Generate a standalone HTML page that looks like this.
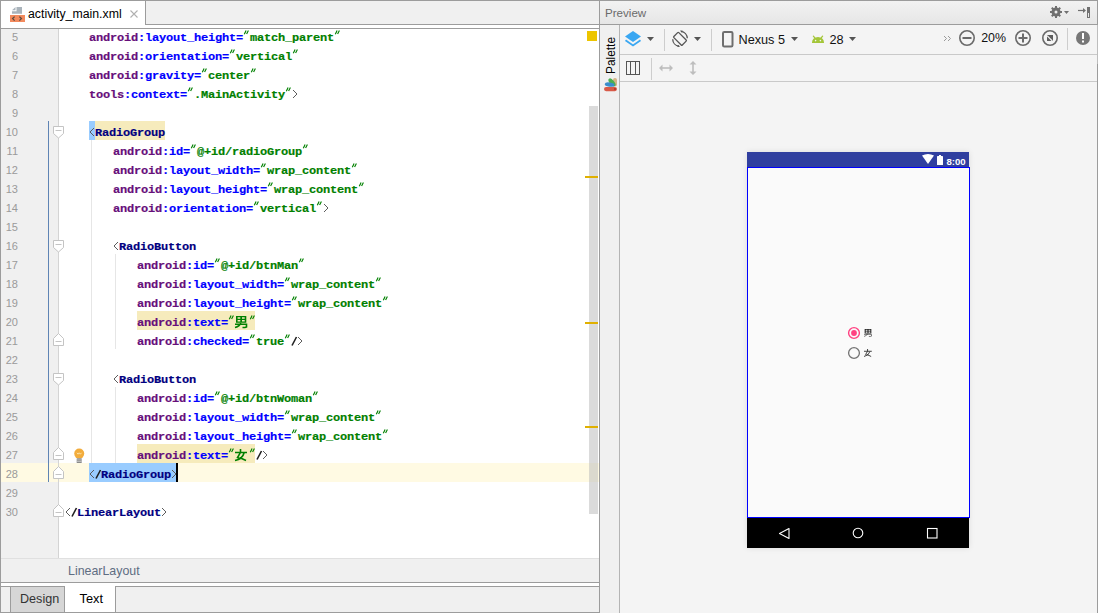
<!DOCTYPE html>
<html><head><meta charset="utf-8">
<style>
*{margin:0;padding:0;box-sizing:border-box}
html,body{width:1098px;height:613px;overflow:hidden;background:#f0f0f0;font-family:"Liberation Sans",sans-serif}
.a{position:absolute}
.ln{position:absolute;left:0;width:17px;text-align:right;font:11px "Liberation Sans",sans-serif;color:#9a9a9a;height:19px;line-height:19px;padding-top:2px}
.l{position:absolute;white-space:pre;font:bold 12px "Liberation Mono",monospace;letter-spacing:-0.2px;height:19px;line-height:19px;padding-top:2.5px;transform:scaleY(0.95);transform-origin:0 14.5px;-webkit-text-stroke:0.2px currentColor}
.p{color:#660e7a}
.b{color:#0000ff}
.g{color:#008000}
.t{color:#000080}
.k{color:#444;font-weight:normal;letter-spacing:-1.2px}
.cj{display:inline-block;width:14px;height:12px;vertical-align:-1px}
.sp{display:inline-block;width:6px;height:1px}
.sq{display:inline-block;width:7px;height:1px}
svg{position:absolute;overflow:visible}
</style></head><body>
<!-- outer borders -->
<div class="a" style="left:0;top:0;width:1098px;height:1px;background:#9c9c9c"></div>
<div class="a" style="left:0;top:0;width:1px;height:613px;background:#9c9c9c"></div>
<div class="a" style="left:1097px;top:0;width:1px;height:613px;background:#9c9c9c"></div>
<div class="a" style="left:599px;top:0;width:1px;height:613px;background:#9c9c9c"></div>

<!-- LEFT: tab strip -->
<div class="a" style="left:1px;top:1px;width:598px;height:27px;background:#fff"></div>
<div class="a" style="left:145px;top:1px;width:454px;height:24px;background:#f0f0f0;border-left:1px solid #9c9c9c;border-bottom:1px solid #9c9c9c"></div>
<div class="a" style="left:1px;top:28px;width:598px;height:1px;background:#9c9c9c"></div>
<!-- xml file icon -->
<svg style="left:10px;top:6px" width="16" height="16" viewBox="0 0 16 16">
  <path d="M2 4.3 L5.5 1 L5.5 4.3 Z" fill="#a9b3bb"/>
  <path d="M6.5 1 H12 V7.8 H2 V5.3 H6.5 Z" fill="#a9b3bb"/>
  <rect x="0" y="9" width="15" height="7" fill="#f28a5d"/>
  <path d="M4.6 10.6 L2.6 12.6 L4.6 14.6 M9.4 10.6 L11.4 12.6 L9.4 14.6" stroke="#5a4a40" stroke-width="1.3" fill="none"/>
</svg>
<div class="a" style="left:28px;top:7.59px;font-size:12.3px;color:#000;line-height:1">activity_main.xml</div>
<svg style="left:130px;top:10px" width="8" height="8" viewBox="0 0 8 8"><path d="M0.5 0.5 L7.5 7.5 M7.5 0.5 L0.5 7.5" stroke="#b0b0b0" stroke-width="1.1"/></svg>

<!-- editor -->
<div id="code" class="a" style="left:1px;top:29px;width:598px;height:529px;background:#fff;overflow:hidden">
  <div class="a" style="left:0;top:0;width:57px;height:529px;background:#f0f0f0"></div>
  <!-- current line row 28 -->
  <div class="a" style="left:0;top:434px;width:598px;height:19px;background:#fffae3"></div>
  <div class="a" style="left:57px;top:0;width:1px;height:529px;background:#d4d4d4"></div>
  <!-- change marker -->
  <div class="a" style="left:47px;top:92px;width:1px;height:361px;background:#5f84b4"></div>
  <!-- highlights -->
  <div class="a" style="left:88px;top:92px;width:6px;height:19px;background:#99ccff"></div>
  <div class="a" style="left:94px;top:92px;width:70px;height:19px;background:#f6ebbc"></div>
  <div class="a" style="left:136px;top:282px;width:118px;height:19px;background:#f6ebbc"></div>
  <div class="a" style="left:136px;top:415px;width:118px;height:19px;background:#f6ebbc"></div>
  <div class="a" style="left:88px;top:434px;width:87px;height:19px;background:#99ccff"></div>
  <div class="a" style="left:175px;top:434px;width:2px;height:19px;background:#000"></div>
  <!-- indent guides -->
  <div class="a" style="left:90px;top:111px;width:1px;height:323px;background:#e6e6e6"></div>
  <div class="a" style="left:114px;top:225px;width:1px;height:95px;background:#e6e6e6"></div>
  <div class="a" style="left:114px;top:358px;width:1px;height:76px;background:#e6e6e6"></div>
<div class="ln" style="top:-3px">5</div>
<div class="ln" style="top:16px">6</div>
<div class="ln" style="top:35px">7</div>
<div class="ln" style="top:54px">8</div>
<div class="ln" style="top:73px">9</div>
<div class="ln" style="top:92px">10</div>
<div class="ln" style="top:111px">11</div>
<div class="ln" style="top:130px">12</div>
<div class="ln" style="top:149px">13</div>
<div class="ln" style="top:168px">14</div>
<div class="ln" style="top:187px">15</div>
<div class="ln" style="top:206px">16</div>
<div class="ln" style="top:225px">17</div>
<div class="ln" style="top:244px">18</div>
<div class="ln" style="top:263px">19</div>
<div class="ln" style="top:282px">20</div>
<div class="ln" style="top:301px">21</div>
<div class="ln" style="top:320px">22</div>
<div class="ln" style="top:339px">23</div>
<div class="ln" style="top:358px">24</div>
<div class="ln" style="top:377px">25</div>
<div class="ln" style="top:396px">26</div>
<div class="ln" style="top:415px">27</div>
<div class="ln" style="top:434px">28</div>
<div class="ln" style="top:453px">29</div>
<div class="ln" style="top:472px">30</div>
<div class="l" style="top:-3px;left:88px"><span class="p">android</span><span class="b">:layout_height=</span><span class="sq"></span><span class="g">match_parent</span><span class="sq"></span></div>
<div class="l" style="top:16px;left:88px"><span class="p">android</span><span class="b">:orientation=</span><span class="sq"></span><span class="g">vertical</span><span class="sq"></span></div>
<div class="l" style="top:35px;left:88px"><span class="p">android</span><span class="b">:gravity=</span><span class="sq"></span><span class="g">center</span><span class="sq"></span></div>
<div class="l" style="top:54px;left:88px"><span class="p">tools</span><span class="b">:context=</span><span class="sq"></span><span class="g">.MainActivity</span><span class="sq"></span><span class="sp"></span></div>
<div class="l" style="top:92px;left:88px"><span class="sp"></span><span class="t">RadioGroup</span></div>
<div class="l" style="top:111px;left:112px"><span class="p">android</span><span class="b">:id=</span><span class="sq"></span><span class="g">@+id/radioGroup</span><span class="sq"></span></div>
<div class="l" style="top:130px;left:112px"><span class="p">android</span><span class="b">:layout_width=</span><span class="sq"></span><span class="g">wrap_content</span><span class="sq"></span></div>
<div class="l" style="top:149px;left:112px"><span class="p">android</span><span class="b">:layout_height=</span><span class="sq"></span><span class="g">wrap_content</span><span class="sq"></span></div>
<div class="l" style="top:168px;left:112px"><span class="p">android</span><span class="b">:orientation=</span><span class="sq"></span><span class="g">vertical</span><span class="sq"></span><span class="sp"></span></div>
<div class="l" style="top:206px;left:112px"><span class="sp"></span><span class="t">RadioButton</span></div>
<div class="l" style="top:225px;left:136px"><span class="p">android</span><span class="b">:id=</span><span class="sq"></span><span class="g">@+id/btnMan</span><span class="sq"></span></div>
<div class="l" style="top:244px;left:136px"><span class="p">android</span><span class="b">:layout_width=</span><span class="sq"></span><span class="g">wrap_content</span><span class="sq"></span></div>
<div class="l" style="top:263px;left:136px"><span class="p">android</span><span class="b">:layout_height=</span><span class="sq"></span><span class="g">wrap_content</span><span class="sq"></span></div>
<div class="l" style="top:282px;left:136px"><span class="p">android</span><span class="b">:text=</span><span class="sq"></span><span class="cj nan"></span><span class="sq"></span></div>
<div class="l" style="top:301px;left:136px"><span class="p">android</span><span class="b">:checked=</span><span class="sq"></span><span class="g">true</span><span class="sq"></span><span class="sp"></span><span class="sp"></span></div>
<div class="l" style="top:339px;left:112px"><span class="sp"></span><span class="t">RadioButton</span></div>
<div class="l" style="top:358px;left:136px"><span class="p">android</span><span class="b">:id=</span><span class="sq"></span><span class="g">@+id/btnWoman</span><span class="sq"></span></div>
<div class="l" style="top:377px;left:136px"><span class="p">android</span><span class="b">:layout_width=</span><span class="sq"></span><span class="g">wrap_content</span><span class="sq"></span></div>
<div class="l" style="top:396px;left:136px"><span class="p">android</span><span class="b">:layout_height=</span><span class="sq"></span><span class="g">wrap_content</span><span class="sq"></span></div>
<div class="l" style="top:415px;left:136px"><span class="p">android</span><span class="b">:text=</span><span class="sq"></span><span class="cj nv"></span><span class="sq"></span><span class="sp"></span><span class="sp"></span></div>
<div class="l" style="top:434px;left:88px"><span class="sp"></span><span class="sp"></span><span class="t">RadioGroup</span><span class="sp"></span></div>
<div class="l" style="top:472px;left:64px"><span class="sp"></span><span class="sp"></span><span class="t">LinearLayout</span><span class="sp"></span></div>
<svg style="left:-1px;top:-29px" width="600" height="560" viewBox="0 0 600 560"><path d="M244.3 34.3 L246.1 30.6 M246.6 34 L248.4 30.6" fill="none" stroke="#008000" stroke-width="1.15"/><path d="M335.3 34.3 L337.1 30.6 M337.6 34 L339.4 30.6" fill="none" stroke="#008000" stroke-width="1.15"/><path d="M230.3 53.3 L232.1 49.6 M232.6 53 L234.4 49.6" fill="none" stroke="#008000" stroke-width="1.15"/><path d="M293.3 53.3 L295.1 49.6 M295.6 53 L297.4 49.6" fill="none" stroke="#008000" stroke-width="1.15"/><path d="M202.3 72.3 L204.1 68.6 M204.6 72 L206.4 68.6" fill="none" stroke="#008000" stroke-width="1.15"/><path d="M251.3 72.3 L253.1 68.6 M253.6 72 L255.4 68.6" fill="none" stroke="#008000" stroke-width="1.15"/><path d="M188.3 91.3 L190.1 87.6 M190.6 91 L192.4 87.6" fill="none" stroke="#008000" stroke-width="1.15"/><path d="M286.3 91.3 L288.1 87.6 M288.6 91 L290.4 87.6" fill="none" stroke="#008000" stroke-width="1.15"/><path d="M293 90 L297 94 L293 98" fill="none" stroke="#5c5c5c" stroke-width="1"/><path d="M94 128 L90 132 L94 136" fill="none" stroke="#5c5c5c" stroke-width="1"/><path d="M191.3 148.3 L193.1 144.6 M193.6 148 L195.4 144.6" fill="none" stroke="#008000" stroke-width="1.15"/><path d="M303.3 148.3 L305.1 144.6 M305.6 148 L307.4 144.6" fill="none" stroke="#008000" stroke-width="1.15"/><path d="M261.3 167.3 L263.1 163.6 M263.6 167 L265.4 163.6" fill="none" stroke="#008000" stroke-width="1.15"/><path d="M352.3 167.3 L354.1 163.6 M354.6 167 L356.4 163.6" fill="none" stroke="#008000" stroke-width="1.15"/><path d="M268.3 186.3 L270.1 182.6 M270.6 186 L272.4 182.6" fill="none" stroke="#008000" stroke-width="1.15"/><path d="M359.3 186.3 L361.1 182.6 M361.6 186 L363.4 182.6" fill="none" stroke="#008000" stroke-width="1.15"/><path d="M254.3 205.3 L256.1 201.6 M256.6 205 L258.4 201.6" fill="none" stroke="#008000" stroke-width="1.15"/><path d="M317.3 205.3 L319.1 201.6 M319.6 205 L321.4 201.6" fill="none" stroke="#008000" stroke-width="1.15"/><path d="M324 204 L328 208 L324 212" fill="none" stroke="#5c5c5c" stroke-width="1"/><path d="M118 242 L114 246 L118 250" fill="none" stroke="#5c5c5c" stroke-width="1"/><path d="M215.3 262.3 L217.1 258.6 M217.6 262 L219.4 258.6" fill="none" stroke="#008000" stroke-width="1.15"/><path d="M299.3 262.3 L301.1 258.6 M301.6 262 L303.4 258.6" fill="none" stroke="#008000" stroke-width="1.15"/><path d="M285.3 281.3 L287.1 277.6 M287.6 281 L289.4 277.6" fill="none" stroke="#008000" stroke-width="1.15"/><path d="M376.3 281.3 L378.1 277.6 M378.6 281 L380.4 277.6" fill="none" stroke="#008000" stroke-width="1.15"/><path d="M292.3 300.3 L294.1 296.6 M294.6 300 L296.4 296.6" fill="none" stroke="#008000" stroke-width="1.15"/><path d="M383.3 300.3 L385.1 296.6 M385.6 300 L387.4 296.6" fill="none" stroke="#008000" stroke-width="1.15"/><path d="M229.3 319.3 L231.1 315.6 M231.6 319 L233.4 315.6" fill="none" stroke="#008000" stroke-width="1.15"/><path d="M250.3 319.3 L252.1 315.6 M252.6 319 L254.4 315.6" fill="none" stroke="#008000" stroke-width="1.15"/><path d="M250.3 338.3 L252.1 334.6 M252.6 338 L254.4 334.6" fill="none" stroke="#008000" stroke-width="1.15"/><path d="M285.3 338.3 L287.1 334.6 M287.6 338 L289.4 334.6" fill="none" stroke="#008000" stroke-width="1.15"/><path d="M292 345.5 L296.5 337" fill="none" stroke="#202020" stroke-width="1.6"/><path d="M298 337 L302 341 L298 345" fill="none" stroke="#5c5c5c" stroke-width="1"/><path d="M118 375 L114 379 L118 383" fill="none" stroke="#5c5c5c" stroke-width="1"/><path d="M215.3 395.3 L217.1 391.6 M217.6 395 L219.4 391.6" fill="none" stroke="#008000" stroke-width="1.15"/><path d="M313.3 395.3 L315.1 391.6 M315.6 395 L317.4 391.6" fill="none" stroke="#008000" stroke-width="1.15"/><path d="M285.3 414.3 L287.1 410.6 M287.6 414 L289.4 410.6" fill="none" stroke="#008000" stroke-width="1.15"/><path d="M376.3 414.3 L378.1 410.6 M378.6 414 L380.4 410.6" fill="none" stroke="#008000" stroke-width="1.15"/><path d="M292.3 433.3 L294.1 429.6 M294.6 433 L296.4 429.6" fill="none" stroke="#008000" stroke-width="1.15"/><path d="M383.3 433.3 L385.1 429.6 M385.6 433 L387.4 429.6" fill="none" stroke="#008000" stroke-width="1.15"/><path d="M229.3 452.3 L231.1 448.6 M231.6 452 L233.4 448.6" fill="none" stroke="#008000" stroke-width="1.15"/><path d="M250.3 452.3 L252.1 448.6 M252.6 452 L254.4 448.6" fill="none" stroke="#008000" stroke-width="1.15"/><path d="M257 459.5 L261.5 451" fill="none" stroke="#202020" stroke-width="1.6"/><path d="M263 451 L267 455 L263 459" fill="none" stroke="#5c5c5c" stroke-width="1"/><path d="M94 470 L90 474 L94 478" fill="none" stroke="#5c5c5c" stroke-width="1"/><path d="M96 478.5 L100.5 470" fill="none" stroke="#202020" stroke-width="1.6"/><path d="M172 470 L176 474 L172 478" fill="none" stroke="#5c5c5c" stroke-width="1"/><path d="M70 508 L66 512 L70 516" fill="none" stroke="#5c5c5c" stroke-width="1"/><path d="M72 516.5 L76.5 508" fill="none" stroke="#202020" stroke-width="1.6"/><path d="M162 508 L166 512 L162 516" fill="none" stroke="#5c5c5c" stroke-width="1"/></svg>

</div>

<!-- scrollbar -->
<div class="a" style="left:589px;top:106px;width:9px;height:408px;background:rgba(190,190,190,0.55)"></div>
<div class="a" style="left:587px;top:31px;width:10px;height:10px;background:#edc500"></div>
<div class="a" style="left:585px;top:176px;width:13px;height:2px;background:#e0b000"></div>
<div class="a" style="left:585px;top:322px;width:13px;height:2px;background:#e0b000"></div>
<div class="a" style="left:585px;top:426px;width:13px;height:2px;background:#e0b000"></div>

<!-- breadcrumb -->
<div class="a" style="left:1px;top:558px;width:598px;height:24px;background:#f0f0f0;border-top:1px solid #e0e0e0"></div>
<div class="a" style="left:1px;top:582px;width:598px;height:1px;background:#9c9c9c"></div>
<div class="a" style="left:68px;top:564.5px;font-size:12.4px;color:#5e6d82;line-height:1">LinearLayout</div>
<div class="a" style="left:1px;top:583px;width:598px;height:3px;background:#fff"></div>
<div class="a" style="left:1px;top:586px;width:598px;height:1px;background:#9c9c9c"></div>
<div class="a" style="left:1px;top:612px;width:598px;height:1px;background:#9c9c9c"></div>
<div class="a" style="left:1px;top:587px;width:9px;height:25px;background:#f0f0f0"></div>
<div class="a" style="left:10px;top:586px;width:55px;height:26px;background:#d6d6d6;border:1px solid #9c9c9c;border-bottom:none"></div>
<div class="a" style="left:65px;top:583px;width:50px;height:29px;background:#fff"></div>
<div class="a" style="left:115px;top:586px;width:484px;height:26px;background:#f0f0f0;border-left:1px solid #9c9c9c;border-top:1px solid #9c9c9c"></div>
<div class="a" style="left:20px;top:593.33px;font-size:12.6px;color:#333;line-height:1">Design</div>
<div class="a" style="left:79.5px;top:593.16px;font-size:12.8px;color:#000;line-height:1">Text</div>

<!-- RIGHT -->
<div class="a" style="left:600px;top:1px;width:497px;height:23px;background:linear-gradient(#f2f2f2,#e6e6e6)"></div>
<div class="a" style="left:600px;top:24px;width:497px;height:1px;background:#9c9c9c"></div>
<div class="a" style="left:605px;top:6.78px;font-size:11.6px;color:#6a6a6a;line-height:1">Preview</div>
<!-- palette strip -->
<div class="a" style="left:600px;top:25px;width:19px;height:588px;background:#f0f0f0"></div>
<div class="a" style="left:619px;top:25px;width:1px;height:588px;background:#b4b4b4"></div>
<div class="a" style="left:606.2px;top:73.5px;font-size:11.9px;line-height:1;color:#000;transform:rotate(-90deg);transform-origin:0 0;white-space:nowrap">Palette</div>
<svg style="left:0;top:0" width="620" height="100" viewBox="0 0 620 100">
  <rect x="613" y="78" width="4" height="8.5" rx="2" fill="#d5b486"/>
  <ellipse cx="612" cy="82.4" rx="2.3" ry="4.7" transform="rotate(-40 612 82.4)" fill="#4caf50"/>
  <ellipse cx="609.6" cy="84.6" rx="4.9" ry="2.1" transform="rotate(8 609.6 84.6)" fill="#3b8dcb"/>
  <rect x="604" y="87" width="13" height="4.2" rx="2.1" fill="#d85a48"/>
  <circle cx="615" cy="89.1" r="1.1" fill="#b3382c"/>
</svg>
<!-- canvas -->
<div class="a" style="left:620px;top:25px;width:477px;height:588px;background:#f4f4f4"></div>
<div class="a" style="left:620px;top:54px;width:477px;height:1px;background:#c9c9c9"></div>
<div class="a" style="left:620px;top:81px;width:477px;height:1px;background:#c9c9c9"></div>
<div class="a" style="left:1097px;top:25px;width:1px;height:588px;background:#9c9c9c"></div>
<div class="a" style="left:1097px;top:25px;width:1px;height:39px;background:#bdbdbd"></div>

<!-- toolbar row 1 -->
<svg style="left:0;top:0" width="1098" height="100" viewBox="0 0 1098 100">
  <!-- layers -->
  <path d="M633 31 L641 36.5 L633 42 L625 36.5 Z" fill="#3aa7f2"/>
  <path d="M625.5 40.2 L633 45.5 L640.5 40.2" fill="none" stroke="#3aa7f2" stroke-width="1.8"/>
  <path d="M647 37 L654 37 L650.5 41 Z" fill="#555"/>
  <rect x="664" y="29" width="1" height="22" fill="#cdcdcd"/>
  <!-- rotate -->
  <g transform="rotate(-45 680 38.8)">
    <rect x="676.5" y="32.8" width="7" height="12" rx="0.8" fill="none" stroke="#555" stroke-width="1.3"/>
  </g>
  <path d="M681 31.3 A7.3 7.3 0 0 1 687.3 38.3" fill="none" stroke="#555" stroke-width="1.3"/>
  <path d="M679 46.2 A7.3 7.3 0 0 1 672.7 39.2" fill="none" stroke="#555" stroke-width="1.3"/>
  <path d="M680 30.5 L683 30.8 L681.5 32.6 Z M680 47 L677 46.7 L678.5 44.9 Z" fill="#555"/>
  <path d="M694 37 L701 37 L697.5 41 Z" fill="#555"/>
  <rect x="711" y="29" width="1" height="22" fill="#cdcdcd"/>
  <!-- phone -->
  <rect x="723" y="32" width="9.5" height="14.5" rx="1.3" fill="none" stroke="#6e6e6e" stroke-width="2"/>
  <path d="M791 37 L798 37 L794.5 41 Z" fill="#555"/>
  <!-- android -->
  <path d="M812 43 L812 42.6 A6 5.7 0 0 1 824 42.6 L824 43 Z" fill="#a4c639"/>
  <path d="M813.4 36.2 L815.4 38.6 M822.6 36.2 L820.6 38.6" stroke="#a4c639" stroke-width="1.3" stroke-linecap="round"/>
  <circle cx="815.6" cy="40.6" r="0.8" fill="#f4f4f4"/>
  <circle cx="820.4" cy="40.6" r="0.8" fill="#f4f4f4"/>
  <path d="M849 37 L856 37 L852.5 41 Z" fill="#555"/>
  <!-- >> -->
  <path d="M944 36 L946.5 38.5 L944 41 M948 36 L950.5 38.5 L948 41" fill="none" stroke="#9a9a9a" stroke-width="1"/>
  <!-- zoom out -->
  <circle cx="967" cy="38" r="7.2" fill="none" stroke="#6a6a6a" stroke-width="1.6"/>
  <rect x="962.5" y="37" width="9" height="2" fill="#6a6a6a"/>
  <!-- zoom in -->
  <circle cx="1023" cy="38" r="7.2" fill="none" stroke="#6a6a6a" stroke-width="1.6"/>
  <rect x="1018.5" y="37" width="9" height="2" fill="#6a6a6a"/>
  <rect x="1022" y="33.5" width="2" height="9" fill="#6a6a6a"/>
  <!-- zoom fit -->
  <circle cx="1050" cy="38" r="7.2" fill="none" stroke="#6a6a6a" stroke-width="1.6"/>
  <rect x="1047" y="35" width="6" height="6" fill="#5e5e5e"/>
  <path d="M1047 35.6 L1052.4 41" stroke="#f4f4f4" stroke-width="1.1"/>
  <rect x="1067" y="28" width="1" height="22" fill="#cdcdcd"/>
  <!-- info -->
  <circle cx="1083" cy="38" r="7" fill="#777"/>
  <rect x="1082" y="33" width="2" height="6" fill="#fff"/>
  <rect x="1082" y="40.5" width="2" height="2" fill="#fff"/>
  <!-- header gear -->
  <g fill="#707070">
    <circle cx="1056" cy="12" r="4.5"/>
    <rect x="1055" y="6" width="2" height="12"/>
    <rect x="1050" y="11" width="12" height="2"/>
    <rect x="1055" y="6" width="2" height="12" transform="rotate(45 1056 12)"/>
    <rect x="1055" y="6" width="2" height="12" transform="rotate(-45 1056 12)"/>
  </g>
  <circle cx="1056" cy="12" r="1.5" fill="#ececec"/>
  <path d="M1064 11 L1069 11 L1066.5 14 Z" fill="#707070"/>
  <!-- hide arrow -->
  <path d="M1078 10.5 L1084 10.5" stroke="#707070" stroke-width="1.2"/>
  <path d="M1083 8 L1086 10.5 L1083 13 Z" fill="#707070"/>
  <rect x="1087" y="7" width="3" height="11" fill="#707070"/>
  <rect x="1088" y="13" width="1" height="4" fill="#e8e8e8"/>
  <!-- row 2 -->
  <rect x="626.5" y="61.5" width="13" height="13" fill="none" stroke="#555" stroke-width="1"/>
  <path d="M630.5 61.5 V74.5 M635.5 61.5 V74.5" stroke="#555" stroke-width="1"/>
  <rect x="651" y="58" width="1" height="22" fill="#cdcdcd"/>
  <path d="M660 68 H672" stroke="#bdbdbd" stroke-width="1.6"/>
  <path d="M659 68 L662.5 64.5 L662.5 71.5 Z M673 68 L669.5 64.5 L669.5 71.5 Z" fill="#bdbdbd"/>
  <path d="M693 62 V74" stroke="#bdbdbd" stroke-width="1.6"/>
  <path d="M693 61 L689.5 64.5 L696.5 64.5 Z M693 75 L689.5 71.5 L696.5 71.5 Z" fill="#bdbdbd"/>
</svg>
<div class="a" style="left:738.5px;top:34.25px;font-size:12.7px;line-height:1;color:#111">Nexus 5</div>
<div class="a" style="left:829.5px;top:34.25px;font-size:12.7px;line-height:1;color:#111">28</div>
<div class="a" style="left:981.2px;top:31.5px;font-size:12.4px;line-height:1;color:#111">20%</div>

<!-- phone -->
<div class="a" style="left:747px;top:152px;width:222px;height:396px;box-shadow:0 0 6px rgba(0,0,0,0.10)"></div>
<div class="a" style="left:747px;top:152px;width:222px;height:15px;background:#303f9f"></div>
<div class="a" style="left:747px;top:167px;width:223px;height:351px;background:#fafafa;border:1px solid #0000ff"></div>
<div class="a" style="left:747px;top:518px;width:222px;height:30px;background:#000"></div>
<svg style="left:0;top:0" width="1098" height="613" viewBox="0 0 1098 613">
  <path d="M922 155.5 Q928 152.5 934 155.5 L928 164 Z" fill="#fff"/>
  <rect x="937" y="156" width="6" height="9" rx="0.6" fill="#fff"/>
  <rect x="939" y="155" width="2" height="1.5" fill="#fff"/>
  <path d="M789 528.5 L789 538.5 L779.5 533.5 Z" fill="none" stroke="#fff" stroke-width="1.1" stroke-linejoin="round"/>
  <circle cx="858" cy="533" r="4.8" fill="none" stroke="#fff" stroke-width="1.1"/>
  <rect x="927.5" y="528.5" width="9.5" height="9.5" fill="none" stroke="#fff" stroke-width="1.1"/>
  <!-- radios -->
  <circle cx="854" cy="333" r="5.4" fill="none" stroke="#ff4081" stroke-width="1.4"/>
  <circle cx="854" cy="333" r="2.9" fill="#ff4081"/>
  <circle cx="854" cy="353" r="5.4" fill="none" stroke="#737373" stroke-width="1.3"/>
</svg>
<div class="a" style="left:946.5px;top:157px;font-size:9.6px;font-weight:bold;line-height:1;color:#fff">8:00</div>
<svg style="left:0;top:0" width="600" height="560" viewBox="0 0 600 560">
<path d="M53.5 126.5 H63.5 V133.5 L58.5 138 L53.5 133.5 Z" fill="#fff" stroke="#c4c4c4" stroke-width="1"/><path d="M55.5 130.5 H61.5" stroke="#c4c4c4" stroke-width="1"/>
<path d="M53.5 240.5 H63.5 V247.5 L58.5 252 L53.5 247.5 Z" fill="#fff" stroke="#c4c4c4" stroke-width="1"/><path d="M55.5 244.5 H61.5" stroke="#c4c4c4" stroke-width="1"/>
<path d="M53.5 373.5 H63.5 V380.5 L58.5 385 L53.5 380.5 Z" fill="#fff" stroke="#c4c4c4" stroke-width="1"/><path d="M55.5 377.5 H61.5" stroke="#c4c4c4" stroke-width="1"/>
<path d="M58.5 333.5 L63.5 338.5 V345.5 H53.5 V338.5 Z" fill="#fff" stroke="#c4c4c4" stroke-width="1"/><path d="M55.5 341.5 H61.5" stroke="#c4c4c4" stroke-width="1"/>
<path d="M58.5 447.5 L63.5 452.5 V459.5 H53.5 V452.5 Z" fill="#fff" stroke="#c4c4c4" stroke-width="1"/><path d="M55.5 455.5 H61.5" stroke="#c4c4c4" stroke-width="1"/>
<path d="M58.5 466.5 L63.5 471.5 V478.5 H53.5 V471.5 Z" fill="#fff" stroke="#c4c4c4" stroke-width="1"/><path d="M55.5 474.5 H61.5" stroke="#c4c4c4" stroke-width="1"/>
<path d="M58.5 504.5 L63.5 509.5 V516.5 H53.5 V509.5 Z" fill="#fff" stroke="#c4c4c4" stroke-width="1"/><path d="M55.5 512.5 H61.5" stroke="#c4c4c4" stroke-width="1"/>
<circle cx="79.2" cy="453.6" r="5" fill="#f2ac3c"/>
<path d="M76.9 452.8 L78.1 454.2 L79.2 452.8 L80.3 454.2 L81.5 452.8" fill="none" stroke="#fde7b0" stroke-width="0.9"/>
<rect x="76.7" y="458.3" width="5" height="4.7" fill="#8a8a8a"/><rect x="76.7" y="459.6" width="5" height="0.7" fill="#d0d0d0"/><rect x="76.7" y="461.2" width="5" height="0.7" fill="#d0d0d0"/>
<g fill="#008000"><path fill-rule="evenodd" d="M236 316 H246.3 V322.8 H236 Z M237.6 317.2 H240.3 V318.8 H237.6 Z M242 317.2 H244.7 V318.8 H242 Z M237.6 320 H240.3 V321.6 H237.6 Z M242 320 H244.7 V321.6 H242 Z"/></g><path d="M235 324.3 H246.5 V327 L245 327.5 H242.5 M240.8 323 Q240 326 235 327.5" fill="none" stroke="#008000" stroke-width="1.6"/>
<path d="M240.5 449 V452.5 M235 452.5 H247 M240.2 452.8 L237.5 457.5 L239 458 M244 453 Q242.5 459 235 460.5 M239.5 457.5 L246 460.5" fill="none" stroke="#008000" stroke-width="1.6"/>
</svg>
<svg style="left:0;top:0" width="1098" height="613" viewBox="0 0 1098 613"><g fill="#222" transform="translate(864 329) scale(0.65) translate(-864 -329)"><path fill-rule="evenodd" d="M865 329 H875.3 V335.8 H865 Z M866.6 330.2 H869.3 V331.8 H866.6 Z M871 330.2 H873.7 V331.8 H871 Z M866.6 333 H869.3 V334.6 H866.6 Z M871 333 H873.7 V334.6 H871 Z"/></g><path d="M864 337.3 H875.5 V340 L874 340.5 H871.5 M869.8 336 Q869 339 864 340.5" fill="none" stroke="#222" transform="translate(864 329) scale(0.65) translate(-864 -329)" stroke-width="0.9"/><path transform="translate(864 349) scale(0.65) translate(-864 -349)" d="M869.5 349 V352.5 M864 352.5 H876 M869.2 352.8 L866.5 357.5 L868 358 M873 353 Q871.5 359 864 360.5 M868.5 357.5 L875 360.5" fill="none" stroke="#222" stroke-width="1.3"/></svg>


</body></html>
